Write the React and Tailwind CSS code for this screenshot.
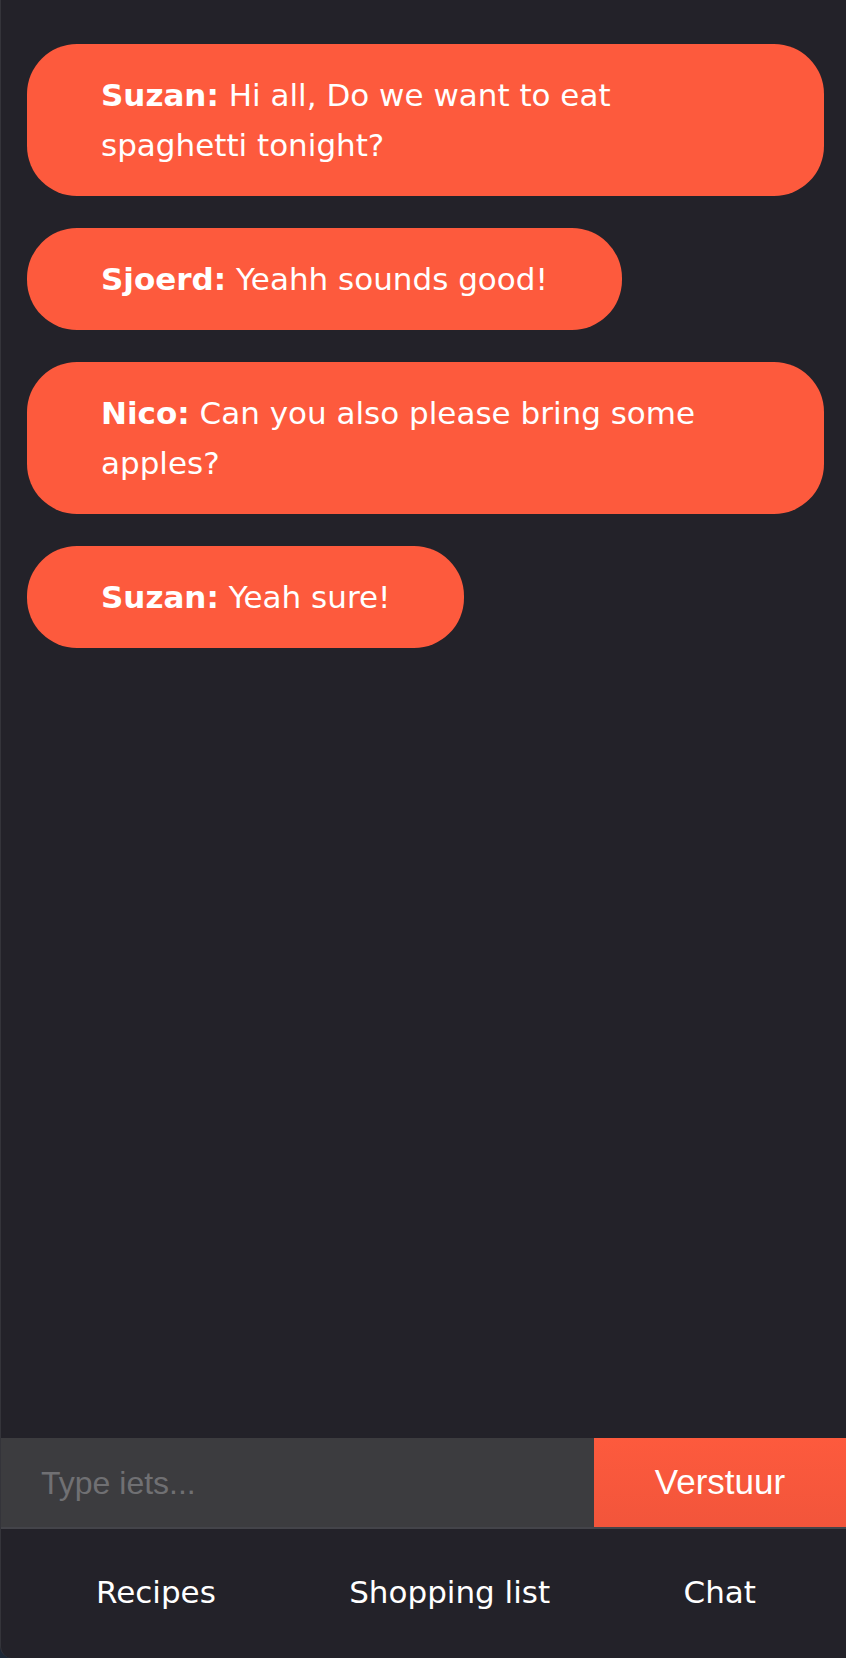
import { useState } from "react";

const messages = [
  { id: 1, name: "Suzan", text: "Hi all, Do we want to eat spaghetti tonight?" },
  { id: 2, name: "Sjoerd", text: "Yeahh sounds good!" },
  { id: 3, name: "Nico", text: "Can you also please bring some apples?" },
  { id: 4, name: "Suzan", text: "Yeah sure!" },
];

const App = () => {
  const [draft, setDraft] = useState("");

  return (
    <div className="h-screen bg-[#1c2736]">
      <div className="h-full flex flex-col bg-[#232229] border-l border-[#34343a] rounded-bl-[12px] overflow-hidden font-['DejaVu_Sans',sans-serif] text-white">
        {/* Messages */}
        <div className="flex-1 pt-[44px] pl-[26px] pr-[22px] flex flex-col items-start gap-[32px]">
          {messages.map((m) => (
            <div
              key={m.id}
              className="max-w-full bg-[#fd5a3d] rounded-[50px] px-[74px] py-[26px] text-[31px] leading-[50px]"
            >
              <span className="font-bold">{m.name}:</span> {m.text}
            </div>
          ))}
        </div>

        {/* Input */}
        <form
          className="flex h-[91px] border-b-2 border-[#44444a]"
          onSubmit={(e) => {
            e.preventDefault();
            setDraft("");
          }}
        >
          <input
            value={draft}
            onChange={(e) => setDraft(e.target.value)}
            placeholder="Type iets..."
            className="flex-1 min-w-0 bg-[#3c3c3f] pl-[40px] text-[32px] font-['Liberation_Sans',sans-serif] text-white placeholder:text-[#707073] outline-none"
          />
          <button
            type="submit"
            className="w-[252px] bg-gradient-to-b from-[#fd5a3d] to-[#f2553b] text-[35px] font-['Liberation_Sans',sans-serif] text-white"
          >
            Verstuur
          </button>
        </form>

        {/* Bottom nav */}
        <nav className="h-[129px] flex items-center justify-between pl-[95px] pr-[90px] text-[31px] pb-[2px]">
          <a href="#" className="text-white">Recipes</a>
          <a href="#" className="text-white">Shopping list</a>
          <a href="#" className="text-white">Chat</a>
        </nav>
      </div>
    </div>
  );
};

export default App;
